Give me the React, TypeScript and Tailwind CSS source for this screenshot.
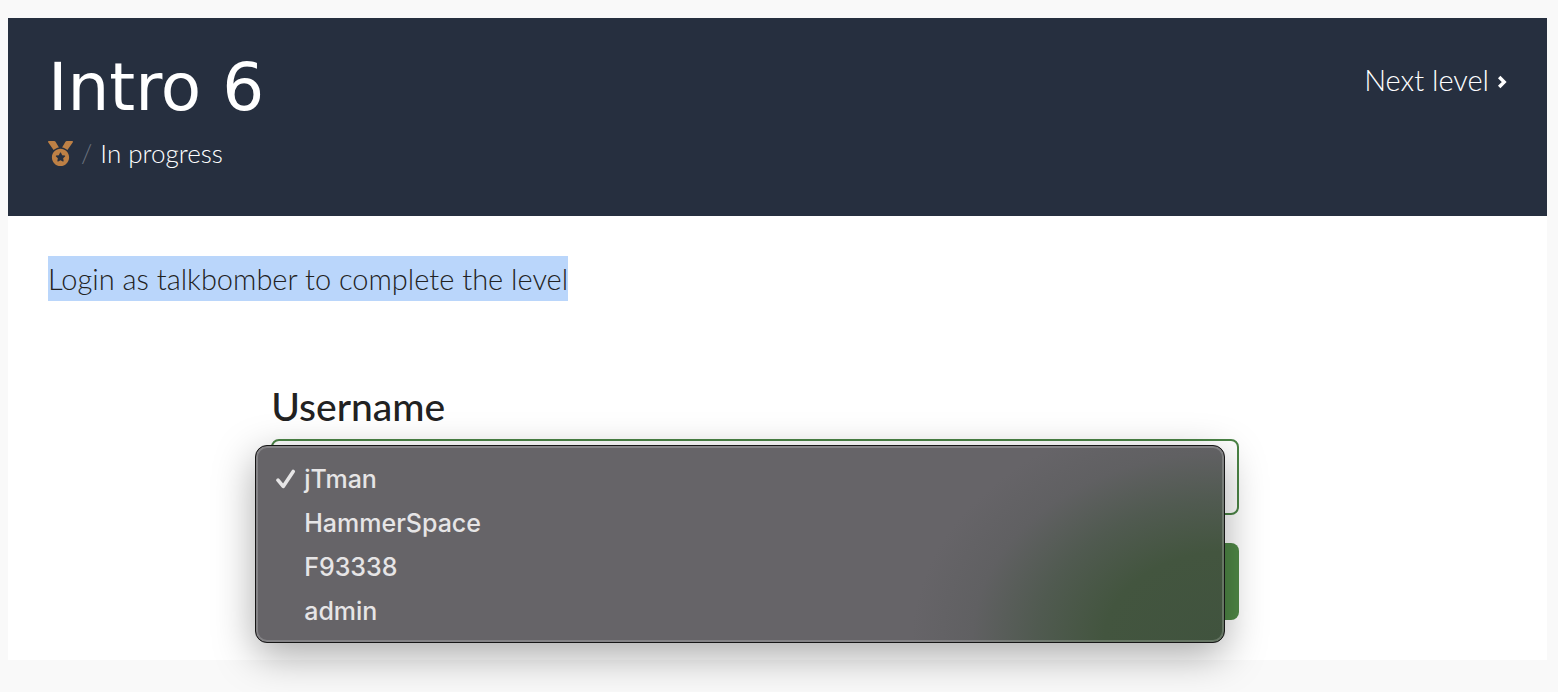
import { useState } from "react";
import { FaMedal } from "react-icons/fa";

const users = ["jTman", "HammerSpace", "F93338", "admin"];

function LevelHeader() {
  return (
    <header className="flex items-start justify-between bg-[#262f3f] px-10 pt-9 pb-11 text-white">
      <div>
        <h1 className="font-['DejaVu_Sans',sans-serif] text-[66px] leading-[68px]">Intro 6</h1>
        <div className="mt-3 flex items-center text-[26px] leading-[38px] font-light">
          <FaMedal className="h-[25px] w-[25px] text-[#bd8045]" aria-hidden="true" />
          <span className="px-2 text-[#6b727e]">/</span>
          <span>In progress</span>
        </div>
      </div>
      <a href="#next" className="mt-2 flex items-center gap-2 text-[29px] leading-9 font-light">
        Next level
        <svg viewBox="0 0 10 14" className="mt-1 h-3.5 w-2.5" fill="none" aria-hidden="true">
          <path d="M2.2 2 L7.2 7 L2.2 12" stroke="currentColor" strokeWidth="3.4" />
        </svg>
      </a>
    </header>
  );
}

function UserMenu({ value, onPick }: { value: string; onPick: (name: string) => void }) {
  return (
    <div
      role="listbox"
      aria-label="Username choices"
      className="absolute top-1.5 right-3.5 -left-4 z-10 flex flex-col rounded-xl border border-[#161616] bg-[#666468] bg-[radial-gradient(ellipse_240px_180px_at_100%_100%,#40533e_0%,#43553f_50%,#505a50_78%,#606062_105%,#666468_130%)] pt-[11px] pb-[9px] font-['Inter',sans-serif] text-[25px] leading-[44px] font-medium text-[#e6e5e6] shadow-[inset_0_0_0_2px_rgba(255,255,255,0.2),0_12px_40px_rgba(0,0,0,0.34)]"
    >
      {users.map((name) => (
        <button
          key={name}
          type="button"
          role="option"
          aria-selected={name === value}
          onClick={() => onPick(name)}
          className="flex items-center pl-5 text-left"
        >
          <span className="flex w-7 items-center">
            {name === value && (
              <svg viewBox="0 0 20 20" className="h-5 w-5" fill="none" aria-hidden="true">
                <path
                  d="M2 11.2 L7.2 17.4 L17.2 2.4"
                  stroke="currentColor"
                  strokeWidth="3.6"
                  strokeLinecap="round"
                  strokeLinejoin="round"
                />
              </svg>
            )}
          </span>
          {name}
        </button>
      ))}
    </div>
  );
}

export default function App() {
  const [user, setUser] = useState(users[0]);

  return (
    <div className="min-h-screen bg-[#f9f9f9] pt-[18px] pr-[11px] pb-8 pl-2 font-['Lato',sans-serif]">
      <main className="bg-white">
        <LevelHeader />
        <section className="px-10 pt-10 pb-10 text-[#222]">
          <p className="text-[29px] leading-[45px] font-light">
            <mark className="inline-block bg-[#bad6fb] text-[#222]">
              Login as talkbomber to complete the level
            </mark>
          </p>
          <form className="mt-[82px] ml-[15.3%] w-[66.3%]">
            <label htmlFor="username" className="block text-[39px] leading-[46px] font-medium">
              Username
            </label>
            <div className="relative mt-2.5">
              <select
                id="username"
                value={user}
                onChange={(event) => setUser(event.target.value)}
                className="block h-[76px] w-full appearance-none rounded-lg border-2 border-[#4b8446] bg-white px-5 text-[28px]"
              >
                {users.map((name) => (
                  <option key={name}>{name}</option>
                ))}
              </select>
              <UserMenu value={user} onPick={setUser} />
            </div>
            <button
              type="button"
              aria-label="Login"
              className="mt-7 block h-[77px] w-full rounded-lg bg-[#508947]"
            />
          </form>
        </section>
      </main>
    </div>
  );
}
